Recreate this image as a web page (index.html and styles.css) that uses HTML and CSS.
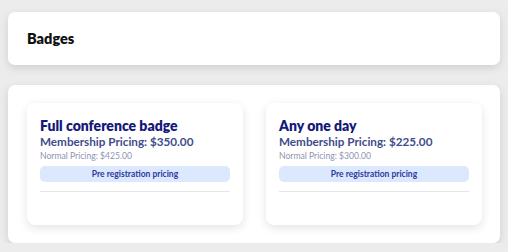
FILE: index.html
```html
<!DOCTYPE html>
<html lang="en">
<head>
    <meta charset="UTF-8">
    <meta name="viewport" content="width=device-width, initial-scale=1.0">
    <title>Badges</title>
    <link rel="stylesheet" href="styles.css">
</head>
<body>

    <div class="panel header">
        <h2>Badges</h2>
    </div>

    <div class="panel badges">
        <div class="badge-card">
            <h3>Full conference badge</h3>
            <div class="member-price">Membership Pricing: $350.00</div>
            <div class="normal-price">Normal Pricing: $425.00</div>
            <div class="pill">Pre registration pricing</div>
            <hr>
        </div>

        <div class="badge-card">
            <h3>Any one day</h3>
            <div class="member-price">Membership Pricing: $225.00</div>
            <div class="normal-price">Normal Pricing: $300.00</div>
            <div class="pill">Pre registration pricing</div>
            <hr>
        </div>
    </div>

</body>
</html>
```

FILE: styles.css
```css
body {
    font-family: Lato, "Noto Sans", sans-serif;
    background-color: #ececec;
    margin: 0;
    padding: 12px 8px 0;
}
.panel {
    background-color: #fff;
    border-radius: 7px;
    box-shadow: 0 3px 8px rgba(0, 0, 0, 0.12);
}
.header {
    height: 53px;
    padding: 0 19px;
    display: flex;
    align-items: center;
    margin-bottom: 20px;
}
.header h2 {
    margin: 0;
    font-size: 14.5px;
    font-weight: 800;
    color: #111;
}
.badges {
    display: grid;
    grid-template-columns: 1fr 1fr;
    gap: 23px;
    padding: 18px 18px 18px 19px;
}
.badge-card {
    background-color: #fff;
    border-radius: 8px;
    box-shadow: 0 3px 10px rgba(0, 0, 0, 0.11);
    padding: 14px 13px 0;
    height: 108px;
}
.badge-card h3 {
    margin: 0;
    font-size: 14px;
    font-weight: 800;
    color: #14197a;
    line-height: 17px;
}
.member-price {
    font-size: 11.7px;
    font-weight: 700;
    color: #404c8c;
    line-height: 15px;
}
.normal-price {
    font-size: 8.6px;
    color: #8e93b3;
    line-height: 12px;
    margin-top: 1px;
}
.pill {
    margin-top: 4px;
    background-color: #dce8fd;
    border-radius: 5px;
    height: 16px;
    line-height: 16px;
    text-align: center;
    font-size: 8.5px;
    font-weight: 700;
    color: #2b3aa0;
}
hr {
    border: none;
    border-top: 1px solid #e6e6e6;
    margin: 9px 0 0;
}
```
